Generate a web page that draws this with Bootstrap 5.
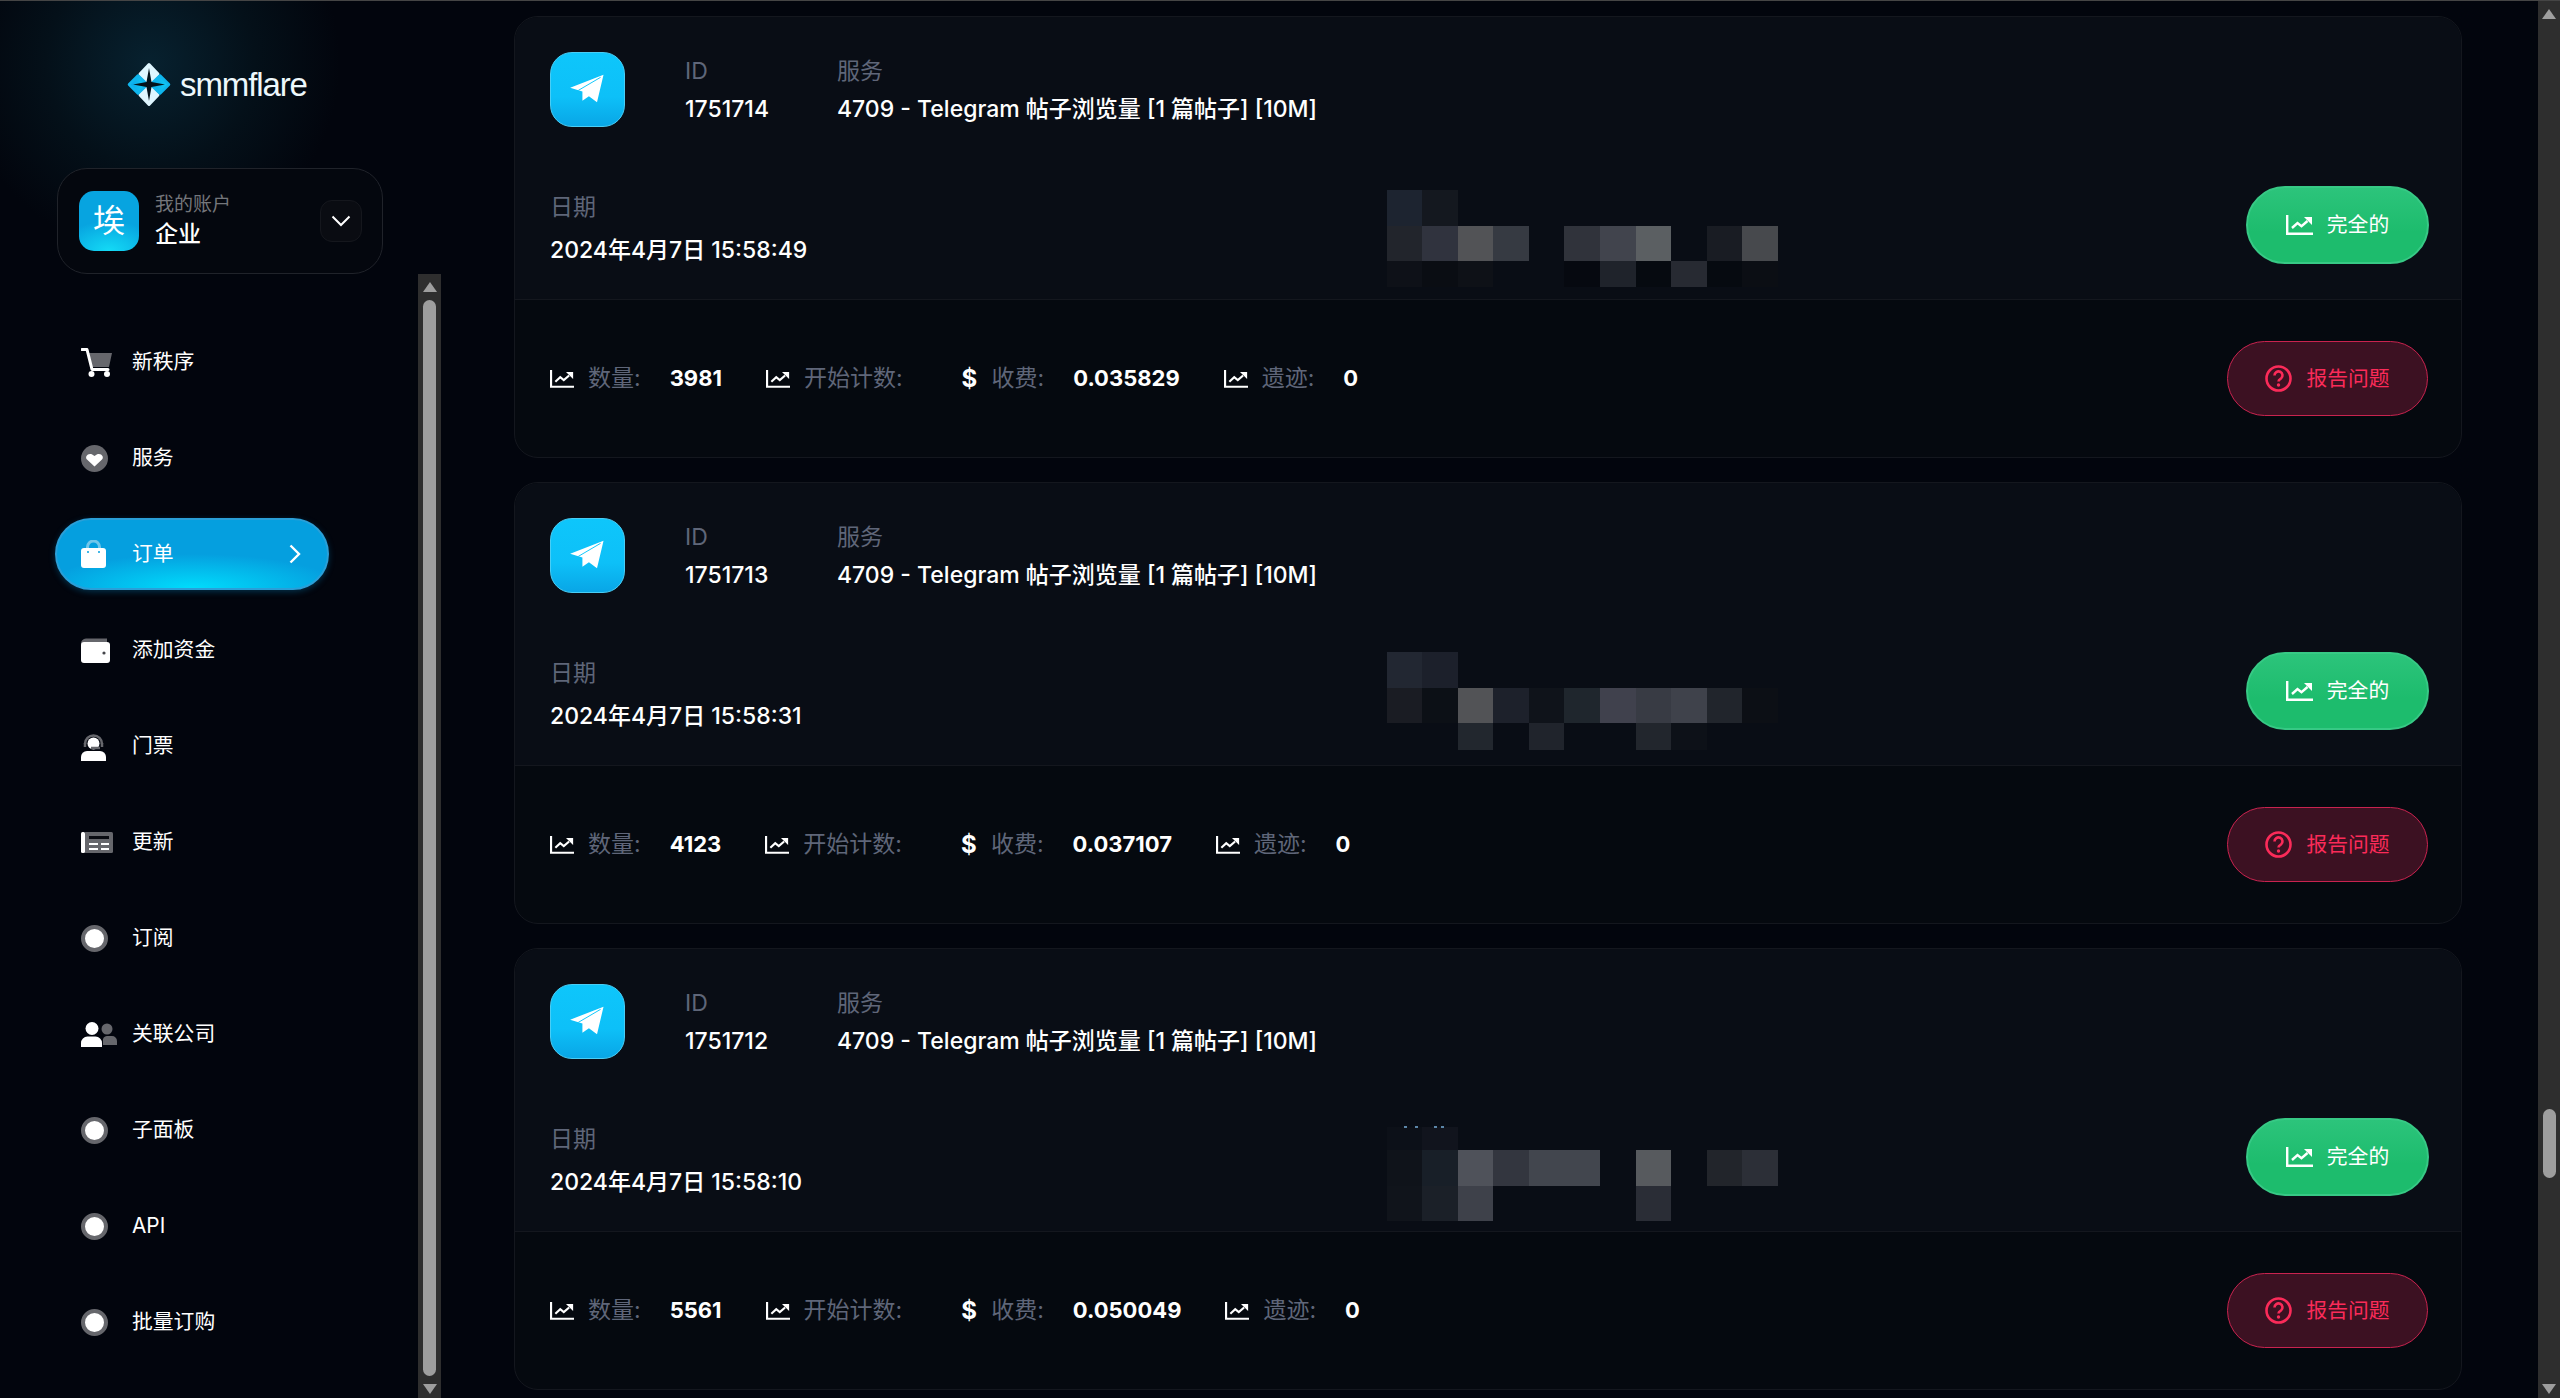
<!DOCTYPE html>
<html lang="zh">
<head>
  <meta charset="UTF-8" />
  <meta name="viewport" content="width=device-width, initial-scale=1" />
  <title>smmflare - 订单</title>
  <link href="https://cdn.jsdelivr.net/npm/bootstrap@5.3.0/dist/css/bootstrap.min.css" rel="stylesheet" />
  <style>
    html, body { height: 100%; }
    body {
      overflow: hidden;
      background: #02050d;
      border-top: 1px solid #454545;
      color: #fff;
      font-family: Inter, "Noto Sans CJK SC", sans-serif;
    }
    .shell { height: 100%; }

    /* sidebar */
    .side {
      width: 441px;
      flex: none;
      background: radial-gradient(circle 190px at 150px 62px, #07212f 0%, #041019 55%, rgba(2,5,13,0) 100%);
    }
    .logo-row { height: 167px; padding: 61px 0 0 127px; gap: 9px; }
    .logo-name { font-size: 33px; line-height: 45px; font-weight: 500; letter-spacing: -1.1px; color: #eef8fc; font-family: "Liberation Sans", sans-serif; }
    .acct {
      width: 326px; height: 106px; margin-left: 57px;
      border: 1px solid #20232a; border-radius: 30px; background: #04070e;
      padding: 0 20px 0 21px;
    }
    .acct-pic {
      width: 60px; height: 60px; border-radius: 15px; font-size: 32px; line-height: 1;
      background: radial-gradient(ellipse 50px 30px at 50% 100%, #14dbf6 0%, #07a4e0 100%);
    }
    .acct-small { font-size: 19px; line-height: 26px; color: #74767b; }
    .acct-big { font-size: 23px; line-height: 32px; color: #fff; font-weight: 500; }
    .acct-drop {
      width: 42px; height: 42px; border-radius: 12px; background: #0a0c12; border: 1px solid #15171d;
    }
    .side-scroll { min-height: 0; }
    .side-nav { width: 274px; margin-left: 55px; padding-top: 52px; gap: 24px; }
    .side-nav .nav-link {
      height: 72px; padding: 0 0 0 26px; color: #fff; font-size: 20.8px; border-radius: 36px;
    }
    .side-nav .ico { width: 51px; flex: none; }
    .side-nav .nav-link.active {
      background: radial-gradient(ellipse 150px 34px at 50% 100%, #00dcfc 0%, #059fdf 100%);
      border: 2px solid #2a9fd8;
      padding-left: 24px;
      padding-right: 26px;
      box-shadow: 0 2px 6px rgba(5,130,190,.35);
    }
    .dot-ico { width: 27px; height: 27px; border-radius: 50%; background: #fff; border: 4px solid #66676c; }

    /* fake scrollbars, same as the browser ones in the shot */
    .sbar { background: #2e2e2e; flex: none; width: 23px; align-items: center; }
    .sbar-main { width: 22px; }
    .sbar-thumb { width: 13px; background: #9e9e9e; border-radius: 7px; }
    .sbar-up { width: 0; height: 0; border-left: 7px solid transparent; border-right: 7px solid transparent; border-bottom: 10px solid #9e9e9e; }
    .sbar-down { width: 0; height: 0; border-left: 7px solid transparent; border-right: 7px solid transparent; border-top: 10px solid #9e9e9e; }

    /* orders */
    .orders { padding: 15px 76px 0 73px; gap: 24px; min-width: 0; }
    .order {
      height: 442px; flex: none;
      background: #05090f; border: 1px solid #14171e; border-radius: 24px; overflow: hidden;
    }
    .order .card-body { height: 282px; flex: none; background: #090d15; padding: 35px 32px 0 35px; }
    .order .card-footer { height: 160px; padding: 0 33px 0 35px; background: transparent; border-top: 1px solid #14171e; border-radius: 0; }
    .tg-pic {
      width: 75px; height: 75px; flex: none; border-radius: 22px;
      background: linear-gradient(180deg, #0ec6fb 0%, #0dc0f8 60%, #09a6e6 100%);
      border: 1px solid #49cdf5;
    }
    .col-id { width: 152px; margin-left: 60px; }
    .f-label { font-size: 23px; line-height: 30px; color: #5f6679; }
    .f-val { font-size: 23px; line-height: 30px; font-weight: 500; color: #fff; }
    .date-col { width: 837px; flex: none; padding-top: 17px; gap: 13px; }
    .mosaic { flex: none; display: block; }
    .stat { gap: 14px; margin-right: 44px; font-size: 23px; }
    .stat-label { color: #5f6679; margin-right: 15px; white-space: nowrap; }
    .stat-val { font-weight: 700; color: #fff; font-size: 22px; }
    .stat-sign { font-weight: 700; font-size: 24px; width: 16px; }
    .btn.state-btn {
      width: 183px; height: 78px; margin-top: 11px; padding: 0; gap: 14px;
      background: linear-gradient(180deg, #2cc47b 0%, #1dbc6d 60%);
      border: 2px solid #37c985; color: #fff; font-size: 20.8px;
    }
    .btn.report-btn {
      width: 201px; height: 75px; padding: 0; gap: 14px;
      background: #3c1122; border: 1px solid #c9234f; color: #fb2b59; font-size: 20.8px;
    }
  </style>
</head>
<body>
<svg width="0" height="0" class="position-absolute">
  <defs>
    <symbol id="chart" viewBox="0 0 27 20">
      <path d="M1.2 0V18.7H27" fill="none" stroke="currentColor" stroke-width="2.4"/>
      <path d="M6 13l5.500-5 4 3.200 6-5.200" fill="none" stroke="currentColor" stroke-width="2.400"/>
      <path d="M18 2h8v8z" fill="currentColor"/>
    </symbol>
    <symbol id="plane" viewBox="0 0 75 75">
      <path d="M20.700 36.700L55 23.300 48.300 51.700 40 45.500 33.300 50V40.500z" fill="#fff"/>
      <path d="M29 39.500L52 26" stroke="#0ec6fb" stroke-width="1" fill="none"/>
    </symbol>
  </defs>
</svg>

<div class="shell d-flex">
  <aside class="side d-flex flex-column">
    <div class="logo-row d-flex align-items-start flex-none">
      <svg width="44" height="45" viewBox="0 0 44 45">
        <defs>
          <linearGradient id="petal" x1="0" y1="0" x2="1" y2="0"><stop offset="0" stop-color="#0aa5e6"/><stop offset="1" stop-color="#12cdf8"/></linearGradient>
        </defs>
        <path d="M22 2.500L31 12 22 21.500 13 12z" fill="#dff6ff" stroke="#dff6ff" stroke-width="3" stroke-linejoin="round"/>
        <path d="M22 23.500L31 33 22 42.500 13 33z" fill="#dff6ff" stroke="#dff6ff" stroke-width="3" stroke-linejoin="round"/>
        <path d="M11 13.500L20.500 22.500 11 31.500 2 22.500z" fill="url(#petal)" stroke="#0fb6ee" stroke-width="2.500" stroke-linejoin="round"/>
        <path d="M33 13.500L42 22.500 33 31.500 23.500 22.500z" fill="url(#petal)" stroke="#0fb6ee" stroke-width="2.500" stroke-linejoin="round"/>
        <path d="M22 6L24.500 20 38 22.500 24.500 25 22 39 19.500 25 6 22.500 19.500 20z" fill="#04121b"/>
      </svg>
      <span class="logo-name">smmflare</span>
    </div>

    <div class="acct d-flex align-items-center flex-none">
      <div class="acct-pic d-flex align-items-center justify-content-center">埃</div>
      <div class="ms-3 flex-grow-1">
        <div class="acct-small">我的账户</div>
        <div class="acct-big">企业</div>
      </div>
      <div class="acct-drop d-flex align-items-center justify-content-center">
        <svg width="20" height="12" viewBox="0 0 20 12"><path d="M1.500 1.500L10 10l8.500-8.500" fill="none" stroke="#fff" stroke-width="2"/></svg>
      </div>
    </div>

    <div class="side-scroll d-flex flex-grow-1 justify-content-between">
      <nav class="side-nav nav flex-column flex-nowrap">
        <a class="nav-link d-flex align-items-center" href="#"><span class="ico d-flex">
          <svg width="32" height="29" viewBox="0 0 32 29"><path d="M8 5h23l-3 14H11z" fill="#66676c"/><path d="M1 1.500h5l5 20h16" fill="none" stroke="#fff" stroke-width="3" stroke-linecap="round" stroke-linejoin="round"/><circle cx="10.500" cy="26" r="3" fill="#fff"/><circle cx="26" cy="26" r="3" fill="#fff"/></svg>
        </span>新秩序</a>
        <a class="nav-link d-flex align-items-center" href="#"><span class="ico d-flex">
          <svg width="27" height="27" viewBox="0 0 27 27"><circle cx="13.500" cy="13.500" r="13.500" fill="#66676c"/><path d="M13.500 21.500L6 14.500c-3-3.500 2.500-8.500 7.500-3.500 5-5 10.500 0 7.500 3.500z" fill="#fff"/></svg>
        </span>服务</a>
        <a class="nav-link active d-flex align-items-center" href="#"><span class="ico d-flex">
          <svg width="25" height="28" viewBox="0 0 25 28"><path d="M6.500 10V7a6 6 0 0 1 12 0v3" fill="none" stroke="#72c6ea" stroke-width="3"/><rect y="8" width="25" height="20" rx="3" fill="#fff"/><circle cx="7" cy="12" r="1" fill="#059fdf"/><circle cx="18" cy="12" r="1" fill="#059fdf"/></svg>
        </span><span class="flex-grow-1">订单</span>
          <svg width="12" height="20" viewBox="0 0 12 20"><path d="M1.500 1.500L10 10l-8.500 8.500" fill="none" stroke="#fff" stroke-width="2.400"/></svg>
        </a>
        <a class="nav-link d-flex align-items-center" href="#"><span class="ico d-flex">
          <svg width="29" height="25" viewBox="0 0 29 25"><path d="M0 6a5 5 0 0 1 5-5.500h21V6z" fill="#66676c"/><rect y="4" width="29" height="21" rx="3" fill="#fff"/><circle cx="23" cy="15" r="1.600" fill="#44454a"/></svg>
        </span>添加资金</a>
        <a class="nav-link d-flex align-items-center" href="#"><span class="ico d-flex">
          <svg width="25" height="29" viewBox="0 0 25 29"><path d="M4 12a8.500 8.500 0 1 1 17 0" fill="none" stroke="#66676c" stroke-width="2.500"/><path d="M4 11v4M21 11v4" stroke="#66676c" stroke-width="2.500"/><circle cx="12.500" cy="11.500" r="6" fill="#fff"/><path d="M10 16h9" stroke="#66676c" stroke-width="2.500"/><path d="M0 29v-4a6 6 0 0 1 6-6h13a6 6 0 0 1 6 6v4z" fill="#fff"/></svg>
        </span>门票</a>
        <a class="nav-link d-flex align-items-center" href="#"><span class="ico d-flex">
          <svg width="32" height="21" viewBox="0 0 32 21"><rect x="3" width="29" height="21" rx="1.500" fill="#66676c"/><rect width="4" height="21" rx="1.500" fill="#fff"/><rect x="8" y="4" width="20" height="3" fill="#0a0c12"/><path d="M8 12h9M20 12h8M8 17h9M20 17h8" stroke="#fff" stroke-width="2"/></svg>
        </span>更新</a>
        <a class="nav-link d-flex align-items-center" href="#"><span class="ico d-flex"><span class="dot-ico"></span></span>订阅</a>
        <a class="nav-link d-flex align-items-center" href="#"><span class="ico d-flex">
          <svg width="36" height="25" viewBox="0 0 36 25"><circle cx="26" cy="7" r="5.500" fill="#66676c"/><path d="M22 23v-4a4 4 0 0 1 4-5h5a5 5 0 0 1 5 5v4z" fill="#66676c"/><circle cx="11" cy="6.500" r="6.500" fill="#fff"/><path d="M0 25v-4a6.500 6.500 0 0 1 6.500-6.500h8a6.500 6.500 0 0 1 6.500 6.500v4z" fill="#fff"/></svg>
        </span>关联公司</a>
        <a class="nav-link d-flex align-items-center" href="#"><span class="ico d-flex"><span class="dot-ico"></span></span>子面板</a>
        <a class="nav-link d-flex align-items-center" href="#"><span class="ico d-flex"><span class="dot-ico"></span></span>API</a>
        <a class="nav-link d-flex align-items-center" href="#"><span class="ico d-flex"><span class="dot-ico"></span></span>批量订购</a>
      </nav>
      <div class="sbar d-flex flex-column">
        <span class="sbar-up mt-2"></span>
        <span class="sbar-thumb flex-grow-1 mt-2"></span>
        <span class="sbar-down mt-2 mb-1"></span>
      </div>
    </div>
  </aside>

  <main class="orders d-flex flex-column flex-grow-1">

    <div class="order card">
      <div class="card-body">
        <div class="d-flex">
          <div class="tg-pic"><svg width="73" height="73" viewBox="1 1 73 73"><use href="#plane"/></svg></div>
          <div class="col-id d-flex flex-column gap-2 pt-1"><div class="f-label">ID</div><div class="f-val">1751714</div></div>
          <div class="d-flex flex-column gap-2 pt-1"><div class="f-label">服务</div><div class="f-val">4709 - Telegram 帖子浏览量 [1 篇帖子] [10M]</div></div>
        </div>
        <div class="d-flex align-items-start" style="margin-top:48px">
          <div class="date-col d-flex flex-column"><div class="f-label">日期</div><div class="f-val">2024年4月7日 15:58:49</div></div>
          <svg class="mosaic" width="391" height="123" viewBox="0 0 391 123">
            <rect x="0" y="15" width="35" height="36" fill="#1d2430"/><rect x="35" y="15" width="36" height="36" fill="#14181f"/>
            <rect x="0" y="51" width="35" height="35" fill="#22252c"/><rect x="35" y="51" width="36" height="35" fill="#30333e"/><rect x="71" y="51" width="35" height="35" fill="#525356"/><rect x="106" y="51" width="36" height="35" fill="#363a42"/>
            <rect x="177" y="51" width="36" height="35" fill="#30333b"/><rect x="213" y="51" width="36" height="35" fill="#41444d"/><rect x="249" y="51" width="35" height="35" fill="#5b5f62"/><rect x="320" y="51" width="35" height="35" fill="#191c23"/><rect x="355" y="51" width="36" height="35" fill="#47494d"/>
            <rect x="0" y="86" width="35" height="26" fill="#0e1118"/><rect x="35" y="86" width="36" height="26" fill="#0a0d13"/><rect x="71" y="86" width="35" height="26" fill="#0e1117"/>
            <rect x="177" y="86" width="36" height="26" fill="#060910"/><rect x="213" y="86" width="36" height="26" fill="#1f232b"/><rect x="249" y="86" width="35" height="26" fill="#060a10"/><rect x="284" y="86" width="36" height="26" fill="#272a32"/><rect x="320" y="86" width="35" height="26" fill="#060a10"/><rect x="355" y="86" width="36" height="26" fill="#0b0e14"/>
          </svg>
          <button type="button" class="btn state-btn rounded-pill ms-auto d-inline-flex align-items-center justify-content-center">
            <svg width="27" height="20"><use href="#chart"/></svg>完全的
          </button>
        </div>
      </div>
      <div class="card-footer d-flex align-items-center">
        <div class="stat d-flex align-items-center"><svg width="24" height="18"><use href="#chart"/></svg><span class="stat-label">数量:</span><span class="stat-val">3981</span></div>
        <div class="stat d-flex align-items-center"><svg width="24" height="18"><use href="#chart"/></svg><span class="stat-label">开始计数:</span></div>
        <div class="stat d-flex align-items-center"><span class="stat-sign">$</span><span class="stat-label">收费:</span><span class="stat-val">0.035829</span></div>
        <div class="stat d-flex align-items-center"><svg width="24" height="18"><use href="#chart"/></svg><span class="stat-label">遗迹:</span><span class="stat-val">0</span></div>
        <button type="button" class="btn report-btn rounded-pill ms-auto d-inline-flex align-items-center justify-content-center">
          <svg width="27" height="27" viewBox="0 0 27 27"><circle cx="13.500" cy="13.500" r="12" fill="none" stroke="currentColor" stroke-width="2.600"/><path d="M9.500 10.500a4 4 0 1 1 6.500 3c-1.500 1-2.500 1.500-2.500 3" fill="none" stroke="currentColor" stroke-width="2.600"/><circle cx="13.500" cy="20" r="1.700" fill="currentColor"/></svg>报告问题
        </button>
      </div>
    </div>

    <div class="order card">
      <div class="card-body">
        <div class="d-flex">
          <div class="tg-pic"><svg width="73" height="73" viewBox="1 1 73 73"><use href="#plane"/></svg></div>
          <div class="col-id d-flex flex-column gap-2 pt-1"><div class="f-label">ID</div><div class="f-val">1751713</div></div>
          <div class="d-flex flex-column gap-2 pt-1"><div class="f-label">服务</div><div class="f-val">4709 - Telegram 帖子浏览量 [1 篇帖子] [10M]</div></div>
        </div>
        <div class="d-flex align-items-start" style="margin-top:48px">
          <div class="date-col d-flex flex-column"><div class="f-label">日期</div><div class="f-val">2024年4月7日 15:58:31</div></div>
          <svg class="mosaic" width="391" height="123" viewBox="0 0 391 123">
            <rect x="0" y="11" width="35" height="36" fill="#222732"/><rect x="35" y="11" width="36" height="36" fill="#1c202b"/>
            <rect x="0" y="47" width="35" height="35" fill="#1a1c23"/><rect x="35" y="47" width="36" height="35" fill="#0c1016"/><rect x="71" y="47" width="35" height="35" fill="#525356"/><rect x="106" y="47" width="36" height="35" fill="#1d212b"/><rect x="142" y="47" width="35" height="35" fill="#0f131a"/><rect x="177" y="47" width="36" height="35" fill="#1f262d"/><rect x="213" y="47" width="36" height="35" fill="#40414d"/><rect x="249" y="47" width="35" height="35" fill="#383b44"/><rect x="284" y="47" width="36" height="35" fill="#3f424b"/><rect x="320" y="47" width="35" height="35" fill="#21252c"/><rect x="355" y="47" width="36" height="35" fill="#0c0f15"/>
            <rect x="71" y="82" width="35" height="27" fill="#22272e"/><rect x="142" y="82" width="35" height="27" fill="#20242c"/><rect x="249" y="82" width="35" height="27" fill="#22262d"/><rect x="284" y="82" width="36" height="27" fill="#0d1118"/>
          </svg>
          <button type="button" class="btn state-btn rounded-pill ms-auto d-inline-flex align-items-center justify-content-center">
            <svg width="27" height="20"><use href="#chart"/></svg>完全的
          </button>
        </div>
      </div>
      <div class="card-footer d-flex align-items-center">
        <div class="stat d-flex align-items-center"><svg width="24" height="18"><use href="#chart"/></svg><span class="stat-label">数量:</span><span class="stat-val">4123</span></div>
        <div class="stat d-flex align-items-center"><svg width="24" height="18"><use href="#chart"/></svg><span class="stat-label">开始计数:</span></div>
        <div class="stat d-flex align-items-center"><span class="stat-sign">$</span><span class="stat-label">收费:</span><span class="stat-val">0.037107</span></div>
        <div class="stat d-flex align-items-center"><svg width="24" height="18"><use href="#chart"/></svg><span class="stat-label">遗迹:</span><span class="stat-val">0</span></div>
        <button type="button" class="btn report-btn rounded-pill ms-auto d-inline-flex align-items-center justify-content-center">
          <svg width="27" height="27" viewBox="0 0 27 27"><circle cx="13.500" cy="13.500" r="12" fill="none" stroke="currentColor" stroke-width="2.600"/><path d="M9.500 10.500a4 4 0 1 1 6.500 3c-1.500 1-2.500 1.500-2.500 3" fill="none" stroke="currentColor" stroke-width="2.600"/><circle cx="13.500" cy="20" r="1.700" fill="currentColor"/></svg>报告问题
        </button>
      </div>
    </div>

    <div class="order card">
      <div class="card-body">
        <div class="d-flex">
          <div class="tg-pic"><svg width="73" height="73" viewBox="1 1 73 73"><use href="#plane"/></svg></div>
          <div class="col-id d-flex flex-column gap-2 pt-1"><div class="f-label">ID</div><div class="f-val">1751712</div></div>
          <div class="d-flex flex-column gap-2 pt-1"><div class="f-label">服务</div><div class="f-val">4709 - Telegram 帖子浏览量 [1 篇帖子] [10M]</div></div>
        </div>
        <div class="d-flex align-items-start" style="margin-top:48px">
          <div class="date-col d-flex flex-column"><div class="f-label">日期</div><div class="f-val">2024年4月7日 15:58:10</div></div>
          <svg class="mosaic" width="391" height="123" viewBox="0 0 391 123">
            <rect x="0" y="20" width="35" height="23" fill="#0c1018"/><rect x="35" y="20" width="36" height="23" fill="#11141d"/>
            <rect x="0" y="43" width="35" height="36" fill="#0f131a"/><rect x="35" y="43" width="36" height="36" fill="#181f28"/><rect x="71" y="43" width="35" height="36" fill="#4f525a"/><rect x="106" y="43" width="36" height="36" fill="#33363f"/><rect x="142" y="43" width="71" height="36" fill="#42464e"/><rect x="249" y="43" width="35" height="36" fill="#575a5e"/><rect x="320" y="43" width="35" height="36" fill="#22252b"/><rect x="355" y="43" width="36" height="36" fill="#2c2f37"/>
            <rect x="0" y="79" width="35" height="35" fill="#10141b"/><rect x="35" y="79" width="36" height="35" fill="#1b2028"/><rect x="71" y="79" width="35" height="35" fill="#3e414a"/><rect x="249" y="79" width="35" height="35" fill="#2a2d36"/>
            <rect x="17" y="19" width="3" height="2" fill="#5b86a8"/><rect x="28" y="19" width="3" height="2" fill="#5b86a8"/><rect x="47" y="19" width="3" height="2" fill="#5b86a8"/><rect x="54" y="19" width="3" height="2" fill="#5b86a8"/>
          </svg>
          <button type="button" class="btn state-btn rounded-pill ms-auto d-inline-flex align-items-center justify-content-center">
            <svg width="27" height="20"><use href="#chart"/></svg>完全的
          </button>
        </div>
      </div>
      <div class="card-footer d-flex align-items-center">
        <div class="stat d-flex align-items-center"><svg width="24" height="18"><use href="#chart"/></svg><span class="stat-label">数量:</span><span class="stat-val">5561</span></div>
        <div class="stat d-flex align-items-center"><svg width="24" height="18"><use href="#chart"/></svg><span class="stat-label">开始计数:</span></div>
        <div class="stat d-flex align-items-center"><span class="stat-sign">$</span><span class="stat-label">收费:</span><span class="stat-val">0.050049</span></div>
        <div class="stat d-flex align-items-center"><svg width="24" height="18"><use href="#chart"/></svg><span class="stat-label">遗迹:</span><span class="stat-val">0</span></div>
        <button type="button" class="btn report-btn rounded-pill ms-auto d-inline-flex align-items-center justify-content-center">
          <svg width="27" height="27" viewBox="0 0 27 27"><circle cx="13.500" cy="13.500" r="12" fill="none" stroke="currentColor" stroke-width="2.600"/><path d="M9.500 10.500a4 4 0 1 1 6.500 3c-1.500 1-2.500 1.500-2.500 3" fill="none" stroke="currentColor" stroke-width="2.600"/><circle cx="13.500" cy="20" r="1.700" fill="currentColor"/></svg>报告问题
        </button>
      </div>
    </div>

  </main>

  <div class="sbar sbar-main d-flex flex-column">
    <span class="sbar-up mt-2"></span>
    <span class="sbar-thumb" style="height:69px;margin-top:1090px"></span>
    <span class="sbar-down mt-auto mb-1"></span>
  </div>
</div>

<script src="https://cdn.jsdelivr.net/npm/bootstrap@5.3.0/dist/js/bootstrap.bundle.min.js"></script>
</body>
</html>
